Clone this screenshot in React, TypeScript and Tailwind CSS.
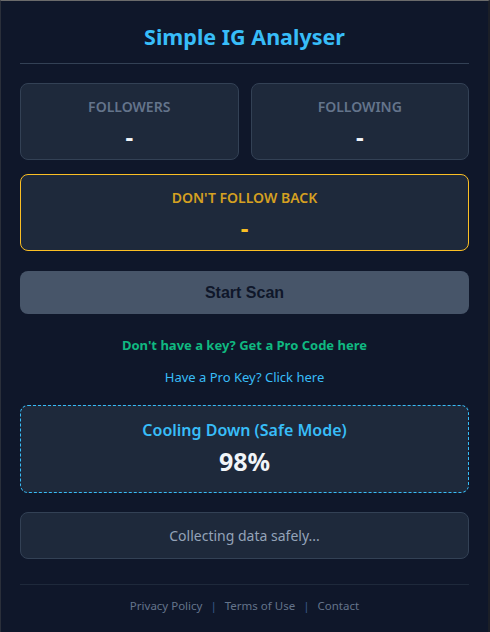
export default function App() {
  const font = { fontFamily: '"Noto Sans", "Open Sans", sans-serif' };
  return (
    <div className="w-[490px] h-[632px] bg-[#0f172a] border-t border-t-[#6b6b6b] border-l border-l-[#2a2f3a] border-r-2 border-r-[#1b1f27] overflow-hidden" style={font}>
      <div className="px-[19px] pt-[22px] flex flex-col">
        <h1 className="text-center text-[21.5px] leading-[28px] font-bold text-[#38bdf8]">Simple IG Analyser</h1>
        <div className="mt-[12px] h-px bg-[#334155]" />

        <div className="mt-[19px] grid grid-cols-2 gap-[12px]">
          <div className="h-[77px] rounded-lg bg-[#1e293b] border border-[#334155] flex flex-col items-center pt-[13px]">
            <div className="text-[14px] leading-[20px] font-semibold text-[#64748b]">FOLLOWERS</div>
            <div className="mt-[6px] text-[24px] leading-[28px] font-bold text-[#f1f5f9]">-</div>
          </div>
          <div className="h-[77px] rounded-lg bg-[#1e293b] border border-[#334155] flex flex-col items-center pt-[13px]">
            <div className="text-[14px] leading-[20px] font-semibold text-[#64748b]">FOLLOWING</div>
            <div className="mt-[6px] text-[24px] leading-[28px] font-bold text-[#f1f5f9]">-</div>
          </div>
        </div>

        <div className="mt-[14px] h-[77px] rounded-lg bg-[#1e293b] border border-[#fbbf24] flex flex-col items-center pt-[13px]">
          <div className="text-[14px] leading-[20px] font-semibold text-[#d5a021]">DON'T FOLLOW BACK</div>
          <div className="mt-[6px] text-[24px] leading-[28px] font-bold text-[#fbbf24]">-</div>
        </div>

        <button className="mt-[20px] h-[43px] rounded-lg bg-[#475569] text-[16px] font-bold text-[#0f172a]" style={{ fontFamily: '"Liberation Sans", Arial, sans-serif' }}>
          Start Scan
        </button>

        <div className="mt-[22px] text-center text-[13px] leading-[18px] font-bold text-[#10b981]">Don't have a key? Get a Pro Code here</div>
        <div className="mt-[14px] text-center text-[13px] leading-[18px] text-[#38bdf8]">Have a Pro Key? Click here</div>

        <div className="mt-[19px] h-[88px] rounded-lg bg-[#1e293b] border border-dashed border-[#38bdf8] flex flex-col items-center pt-[13px]">
          <div className="text-[16px] leading-[22px] font-semibold text-[#38bdf8]">Cooling Down (Safe Mode)</div>
          <div className="mt-[5px] text-[25px] leading-[31px] font-bold text-[#f1f5f9]">98%</div>
        </div>

        <div className="mt-[19px] h-[47px] rounded-lg bg-[#1e293b] border border-[#334155] flex items-center justify-center">
          <span className="text-[14px] text-[#94a3b8]">Collecting data safely...</span>
        </div>

        <div className="mt-[25px] h-px bg-[#1e293b]" />
        <div className="mt-[12px] flex justify-center items-center gap-[8px] text-[11.5px] leading-[18px]">
          <span className="text-[#64748b]">Privacy Policy</span>
          <span className="text-[#3b5b8a]">|</span>
          <span className="text-[#64748b]">Terms of Use</span>
          <span className="text-[#3b5b8a]">|</span>
          <span className="text-[#64748b]">Contact</span>
        </div>
      </div>
    </div>
  );
}
